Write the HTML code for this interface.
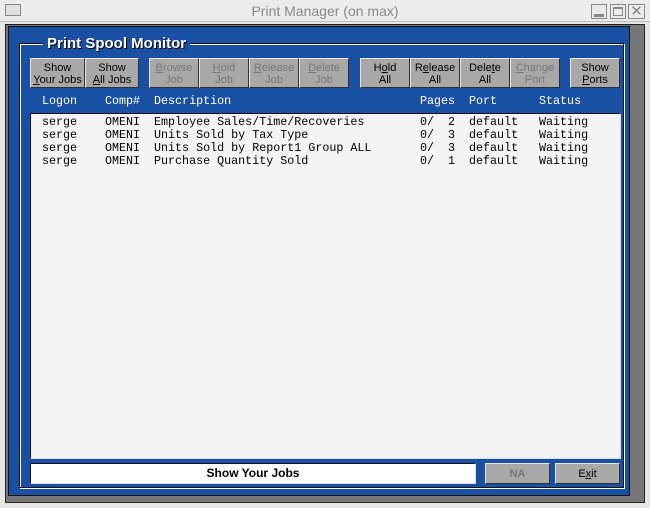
<!DOCTYPE html><html><head><style>
*{margin:0;padding:0;box-sizing:border-box}
body{width:650px;height:508px;background:#e6e6e2;position:relative;overflow:hidden;font-family:"Liberation Sans",sans-serif}
.a{position:absolute}
.btn{position:absolute;top:58px;height:30px;background:#a8a8a8;border:1px solid;border-color:#e8e8e8 #303030 #303030 #e8e8e8;font-size:11px;line-height:12px;text-align:center;color:#000;padding-top:3px}
.dis{color:#777}
.m{position:absolute;font-family:"Liberation Mono",monospace;font-size:11.7px;white-space:pre;line-height:13px}
u{text-decoration:underline}
</style></head><body>
<div class="a" style="left:0;top:0;width:650px;height:22px;background:#ececea;border-bottom:1px solid #bbb"></div>
<div class="a" style="left:5px;top:4px;width:16px;height:12px;border:1px solid #888;background:#e0e0e0"></div>
<div class="a" style="left:0;top:3px;width:650px;text-align:center;font-size:14px;color:#888">Print Manager (on max)</div>
<div class="a" style="left:591px;top:4px;width:16px;height:15px;border:1px solid #888;background:#e8e8e8"><div class="a" style="left:2px;top:9px;width:10px;height:3px;background:#888"></div></div>
<div class="a" style="left:610px;top:4px;width:16px;height:15px;border:1px solid #888"><div class="a" style="left:2px;top:2px;width:10px;height:9px;border:1px solid #888;border-top-width:2px"></div></div>
<div class="a" style="left:628px;top:4px;width:17px;height:15px;border:1px solid #888;color:#888;font-size:15px;line-height:13px;text-align:center">✕</div>
<div class="a" style="left:5px;top:24px;width:640px;height:479px;border:1px solid #222;background:#777"></div>
<div class="a" style="left:8px;top:26px;width:622px;height:470px;border:1px solid #111;background:#1a50a4"></div>
<div class="a" style="left:19px;top:43px;width:605px;height:445px;border:1px solid #111;box-shadow:1px 1px 0 #fff, inset 1px 1px 0 #fff"></div>
<div class="a" style="left:43px;top:35px;padding:0 4px;background:#1a50a4;color:#fff;font-weight:bold;font-size:15px;text-shadow:1px 1px 0 #000">Print Spool Monitor</div>
<div class="btn" style="left:30px;width:55px">Show<br><u>Y</u>our Jobs</div>
<div class="btn" style="left:85px;width:54px">Show<br><u>A</u>ll Jobs</div>
<div class="btn dis" style="left:149px;width:50px"><u>B</u>rowse<br>Job</div>
<div class="btn dis" style="left:199px;width:50px"><u>H</u>old<br>Job</div>
<div class="btn dis" style="left:249px;width:50px"><u>R</u>elease<br>Job</div>
<div class="btn dis" style="left:299px;width:50px"><u>D</u>elete<br>Job</div>
<div class="btn" style="left:360px;width:50px">H<u>o</u>ld<br>All</div>
<div class="btn" style="left:410px;width:50px">R<u>e</u>lease<br>All</div>
<div class="btn" style="left:460px;width:50px">Dele<u>t</u>e<br>All</div>
<div class="btn dis" style="left:510px;width:50px"><u>C</u>hange<br>Port</div>
<div class="btn" style="left:570px;width:50px">Show<br><u>P</u>orts</div>
<div class="m" style="left:42px;top:95px;color:#fff">Logon</div>
<div class="m" style="left:105px;top:95px;color:#fff">Comp#</div>
<div class="m" style="left:154px;top:95px;color:#fff">Description</div>
<div class="m" style="left:420px;top:95px;color:#fff">Pages</div>
<div class="m" style="left:469px;top:95px;color:#fff">Port</div>
<div class="m" style="left:539px;top:95px;color:#fff">Status</div>
<div class="a" style="left:30px;top:113px;width:591px;height:346px;background:#f4f4f4;border:1px solid;border-color:#111 #ddd #ddd #111"></div>
<div class="m" style="left:42px;top:116px">serge
serge
serge
serge</div>
<div class="m" style="left:105px;top:116px">OMENI
OMENI
OMENI
OMENI</div>
<div class="m" style="left:154px;top:116px">Employee Sales/Time/Recoveries
Units Sold by Tax Type
Units Sold by Report1 Group ALL
Purchase Quantity Sold</div>
<div class="m" style="left:420px;top:116px">0/  2
0/  3
0/  3
0/  1</div>
<div class="m" style="left:469px;top:116px">default
default
default
default</div>
<div class="m" style="left:539px;top:116px">Waiting
Waiting
Waiting
Waiting</div>
<div class="a" style="left:30px;top:463px;width:446px;height:21px;background:#fff;border:1px solid;border-color:#111 #ddd #ddd #111;text-align:center;font-weight:bold;font-size:12px;line-height:19px">Show Your Jobs</div>
<div class="btn dis" style="left:485px;top:463px;width:65px;height:21px;font-weight:bold;font-size:11px;padding-top:4px">NA</div>
<div class="btn" style="left:555px;top:463px;width:65px;height:21px;font-size:11px;padding-top:4px">E<u>x</u>it</div>
</body></html>
